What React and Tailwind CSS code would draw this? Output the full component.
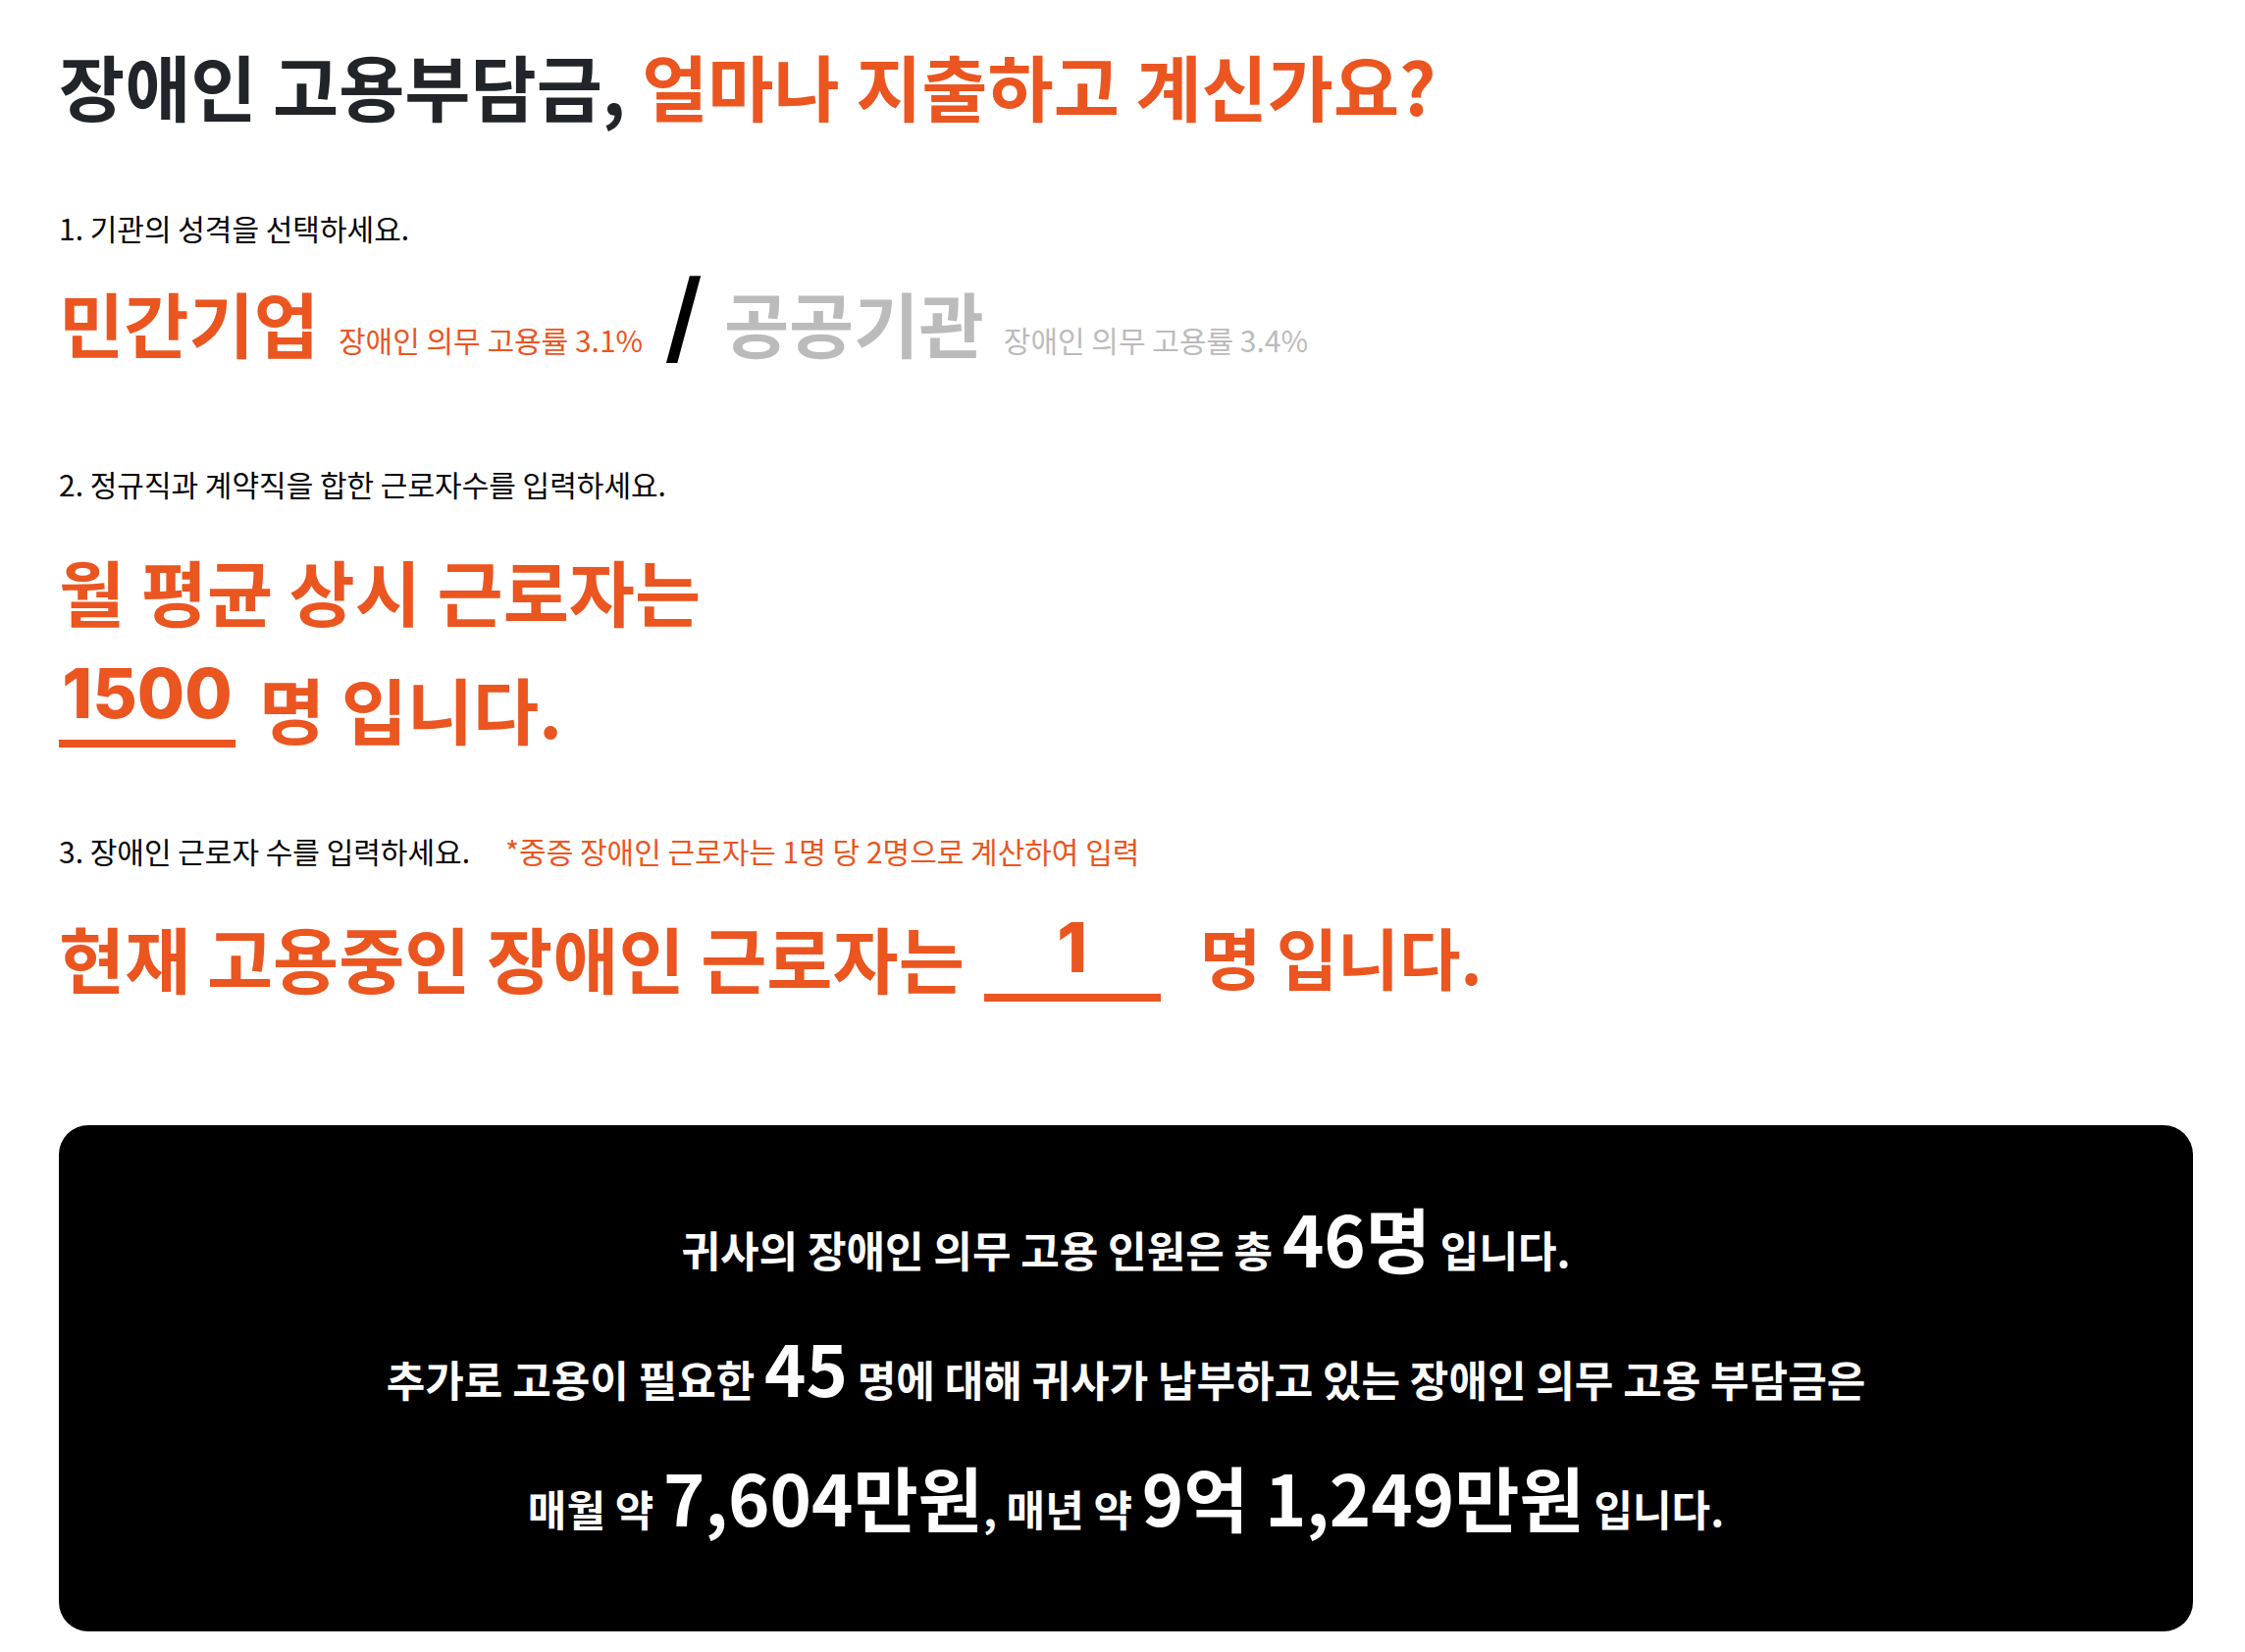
import React, { useState } from 'react';

const ORGANIZATIONS = [
  { id: 'private', name: '민간기업', rate: 3.1 },
  { id: 'public', name: '공공기관', rate: 3.4 },
];

const App = () => {
  const [orgId, setOrgId] = useState('private');
  const [workers, setWorkers] = useState('1500');
  const [disabledWorkers, setDisabledWorkers] = useState('1');

  const org = ORGANIZATIONS.find((item) => item.id === orgId);
  const required = Math.floor((Number(workers) * org.rate) / 100);
  const shortage = Math.max(required - Number(disabledWorkers), 0);

  return (
    <main className="pl-15 pr-[53px] pt-[34px] pb-5 bg-white text-black font-['Noto_Sans_CJK_KR',sans-serif] text-[30px] leading-[40px]">
      <h1 className="text-[73px] leading-[104px] font-bold text-[#212529]">
        장애인 고용부담금, <span className="text-[#eb5520]">얼마나 지출하고 계신가요?</span>
      </h1>

      <section className="mt-[74px]">
        <p>1. 기관의 성격을 선택하세요.</p>
        <div className="mt-6 flex items-baseline">
          <OrgButton item={ORGANIZATIONS[0]} active={orgId === 'private'} onClick={() => setOrgId('private')} />
          <span className="mx-[22px] font-['Inter',sans-serif] text-[102px] leading-[72px] font-semibold">/</span>
          <OrgButton item={ORGANIZATIONS[1]} active={orgId === 'public'} onClick={() => setOrgId('public')} />
        </div>
      </section>

      <section className="mt-[93px]">
        <label htmlFor="workers">2. 정규직과 계약직을 합한 근로자수를 입력하세요.</label>
        <div className="mt-7 text-[73px] leading-[120px] font-bold text-[#eb5520]">
          <p>월 평균 상시 근로자는</p>
          <div className="flex items-center">
            <NumberField id="workers" value={workers} onChange={setWorkers} />
            <span className="ml-6">명 입니다.</span>
          </div>
        </div>
      </section>

      <section className="mt-[66px]">
        <label htmlFor="disabled-workers">
          3. 장애인 근로자 수를 입력하세요.
          <span className="ml-9 text-[#eb5520]">*중증 장애인 근로자는 1명 당 2명으로 계산하여 입력</span>
        </label>
        <div className="mt-7 flex items-end text-[73px] leading-[120px] font-bold text-[#eb5520]">
          <span className="mr-5">현재 고용중인 장애인 근로자는</span>
          <NumberField id="disabled-workers" value={disabledWorkers} onChange={setDisabledWorkers} />
          <span className="ml-10 text-[68px]">명 입니다.</span>
        </div>
      </section>

      <section className="mt-28 rounded-[30px] bg-black py-15 text-center text-[43px] leading-[132px] font-bold text-white">
        <p>귀사의 장애인 의무 고용 인원은 총 <Strong>{required}명</Strong> 입니다.</p>
        <p>추가로 고용이 필요한 <Strong>{shortage}</Strong> 명에 대해 귀사가 납부하고 있는 장애인 의무 고용 부담금은</p>
        <p>매월 약 <Strong>7,604만원</Strong>, 매년 약 <Strong>9억 1,249만원</Strong> 입니다.</p>
      </section>
    </main>
  );
};

const OrgButton = ({ item, active, onClick }) => (
  <button
    type="button"
    aria-pressed={active}
    onClick={onClick}
    className={active ? 'cursor-pointer text-[#eb5520]' : 'cursor-pointer text-[#bbbbbb]'}
  >
    <span className="mr-5 text-[72px] leading-[104px] font-bold">{item.name}</span>
    <span>장애인 의무 고용률 {item.rate}%</span>
  </button>
);

const NumberField = ({ id, value, onChange }) => (
  <input
    id={id}
    type="text"
    inputMode="numeric"
    value={value}
    onChange={(e) => onChange(e.target.value.replace(/\D/g, ''))}
    className="mb-[14px] h-24 w-[180px] border-b-8 border-[#eb5520] pb-2 text-center font-['Inter',sans-serif] text-[70px] leading-[72px] font-extrabold outline-none"
  />
);

const Strong = ({ children }) => <strong className="text-[72px] leading-[72px] font-bold">{children}</strong>;

export default App;
